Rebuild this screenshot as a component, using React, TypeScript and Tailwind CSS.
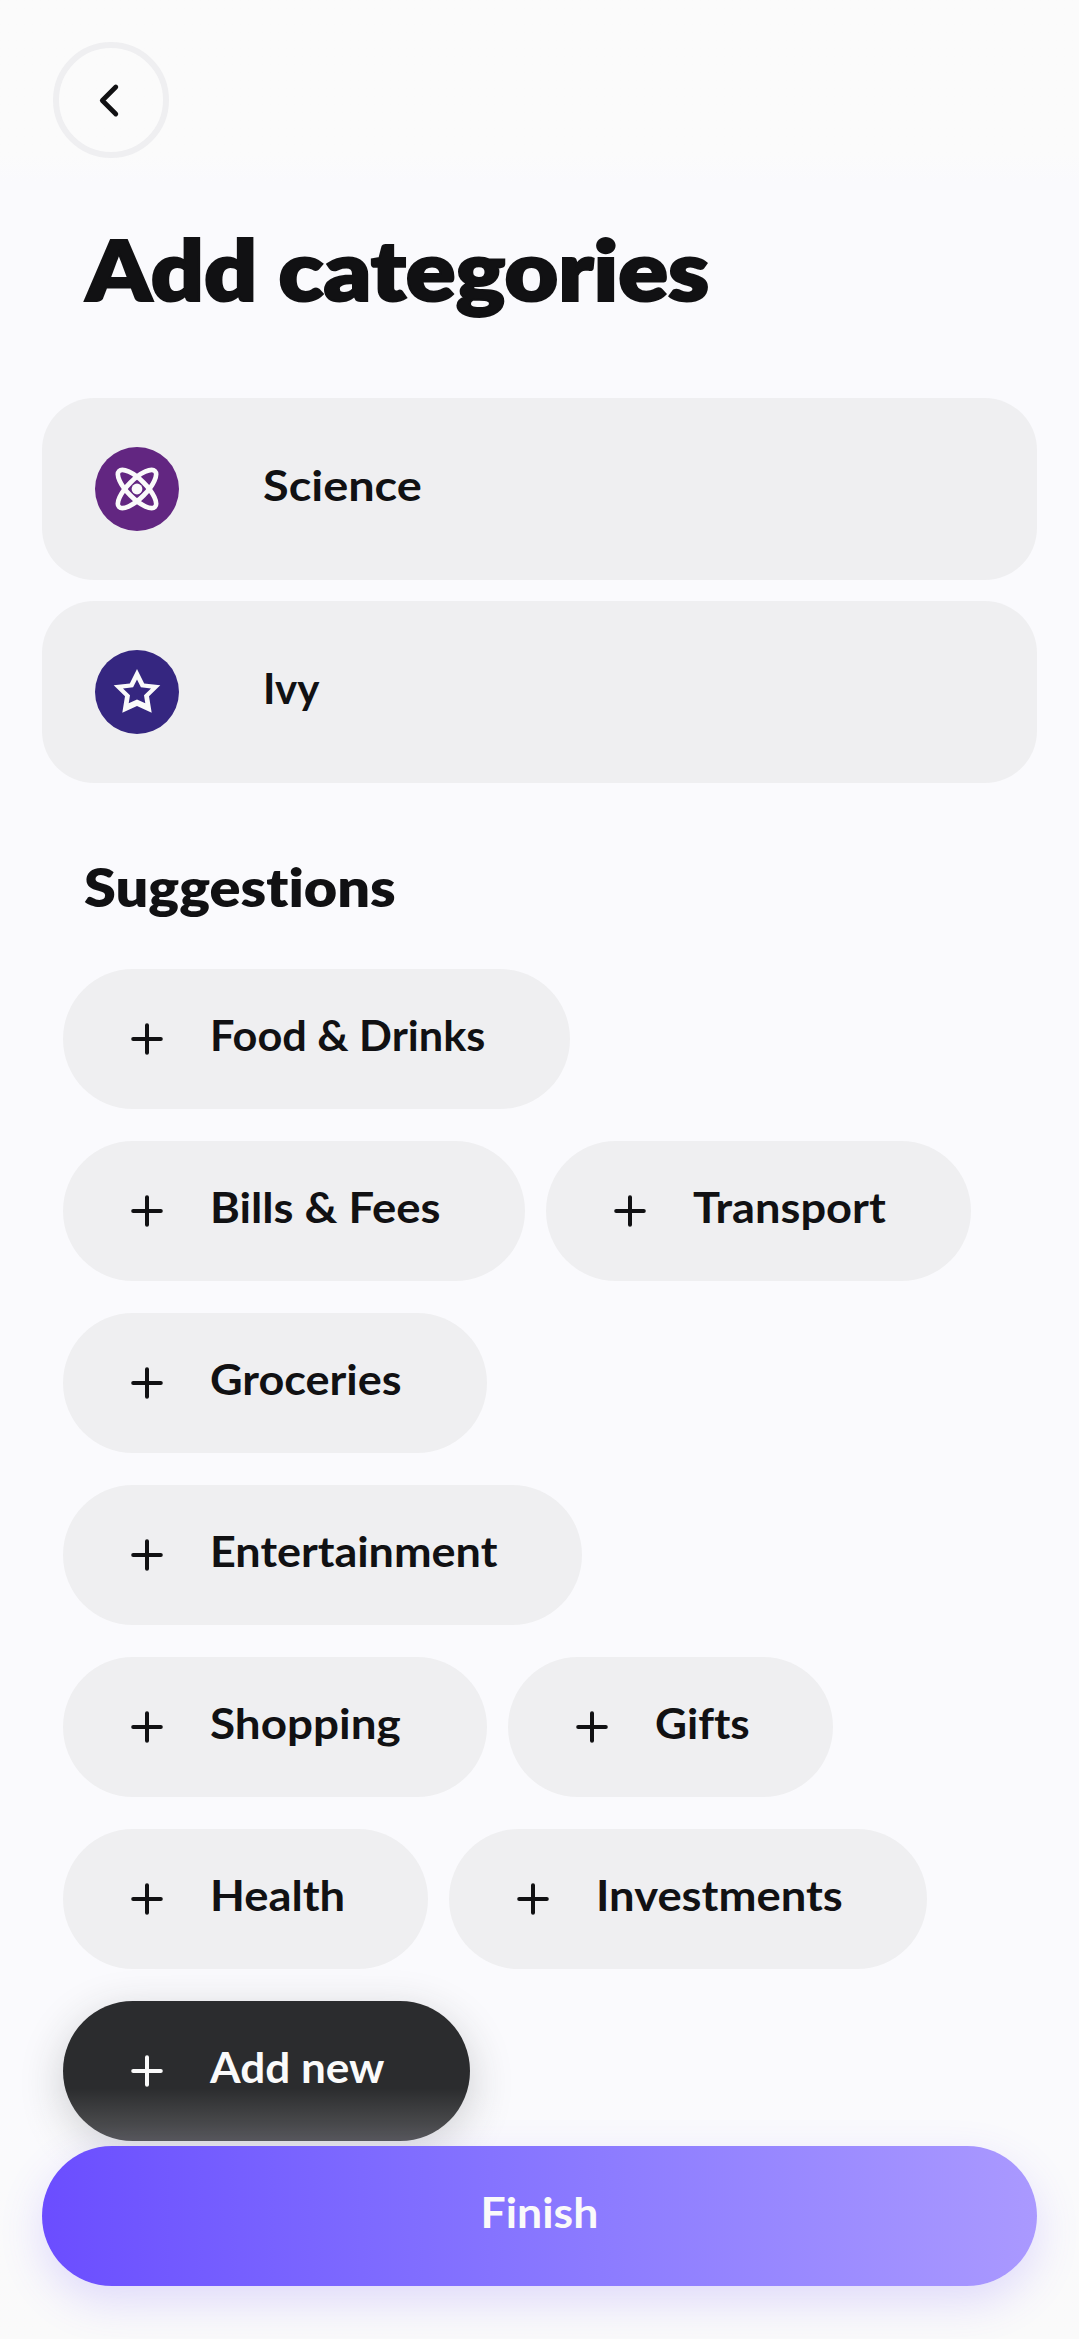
import type { ReactNode } from "react";

type ChipData = { label: string; width: string; stretch: string; dark?: boolean };

const rows: ChipData[][] = [
  [{ label: "Food & Drinks", width: "w-[506.5px]", stretch: "scale-x-[1.03]" }],
  [
    { label: "Bills & Fees", width: "w-[461.5px]", stretch: "scale-x-[1.081]" },
    { label: "Transport", width: "w-[425px]", stretch: "scale-x-[1.076]" },
  ],
  [{ label: "Groceries", width: "w-[424px]", stretch: "scale-x-[1.071]" }],
  [{ label: "Entertainment", width: "w-[519px]", stretch: "scale-x-[1.07]" }],
  [
    { label: "Shopping", width: "w-[424px]", stretch: "scale-x-[1.091]" },
    { label: "Gifts", width: "w-[325px]", stretch: "scale-x-[1.05]" },
  ],
  [
    { label: "Health", width: "w-[365px]", stretch: "scale-x-[1.079]" },
    { label: "Investments", width: "w-[478px]", stretch: "scale-x-[1.08]" },
  ],
  [{ label: "Add new", width: "w-[407px]", stretch: "scale-x-[1.05]", dark: true }],
];

function PlusIcon() {
  return (
    <svg className="size-[42px] shrink-0" viewBox="0 0 42 42" fill="none" stroke="currentColor" strokeWidth="4" strokeLinecap="round">
      <path d="M7.2 21h27.6M21 7.2v27.6" />
    </svg>
  );
}

function AtomIcon() {
  return (
    <svg className="size-[84px]" viewBox="-42 -42 84 84" fill="none" stroke="#fafafa" strokeWidth="4.7">
      <ellipse rx="25.4" ry="9.2" transform="rotate(45)" />
      <ellipse rx="25.4" ry="9.2" transform="rotate(-45)" />
      <circle r="5.4" fill="#fafafa" stroke="none" />
    </svg>
  );
}

function StarIcon() {
  return (
    <svg className="size-[84px]" viewBox="-42 -42 84 84" fill="#fafafa" fillRule="evenodd">
      <path d="M0-23 7.2-8.5 23.3-6.8 12 4.2 14.7 20.8 0 14 -14.7 20.8 -12 4.2 -23.3-6.8 -7.2-8.5ZM0-12.6 -3.9-4.8 -14-3.6 -7 3.2 -8.3 11.3 0 7.6 8.3 11.3 7 3.2 14-3.6 3.9-4.8Z" />
    </svg>
  );
}

function Chip({ label, width, stretch, dark }: ChipData) {
  const tone = dark
    ? "bg-[#2b2c2e] text-[#fafafa] shadow-[0_12px_44px_rgba(43,44,46,0.22)]"
    : "bg-[#efeff1] text-[#111113]";
  return (
    <button className={`flex h-[140px] shrink-0 items-center rounded-full pl-[63px] text-[42px] font-bold leading-none whitespace-nowrap ${tone} ${width}`}>
      <PlusIcon />
      <span className={`ml-[42px] origin-left pb-[9px] ${stretch}`}>{label}</span>
    </button>
  );
}

function CategoryCard({ children, label, tone, stretch }: { children: ReactNode; label: string; tone: string; stretch: string }) {
  return (
    <div className="flex h-[182px] items-center rounded-[52px] bg-[#efeff1] pl-[53px]">
      <div className={`size-[84px] rounded-full ${tone}`}>{children}</div>
      <span className={`ml-[84px] origin-left pb-[9px] text-[42px] font-bold leading-none ${stretch}`}>{label}</span>
    </div>
  );
}

export default function App() {
  return (
    <div className="relative h-[2339px] w-[1079px] overflow-hidden bg-[#fafafd] font-[Lato,sans-serif] text-[#111113] [font-variant-ligatures:none]">
      <header className="flex h-[182px] bg-linear-to-b from-[#fbfbfb] from-85% to-[#fafafd] pt-[42px] pl-[53px]">
        <button className="flex size-[116px] items-center justify-center rounded-full border-[6px] border-[#efeff1]">
          <svg className="size-[63px]" viewBox="0 0 63 63" fill="none" stroke="#111113" strokeWidth="4.8" strokeLinecap="round" strokeLinejoin="round">
            <path d="M35.8 18 22.3 31.5 35.8 45" />
          </svg>
        </button>
      </header>

      <h1 className="mt-[37px] ml-[86px] w-fit origin-left scale-x-[1.102] text-[84px] leading-[100px] font-extrabold [-webkit-text-stroke:2px_#111113]">Add categories</h1>

      <section className="mx-[42px] mt-[79px] flex flex-col gap-[21px]">
        <CategoryCard label="Science" tone="bg-[#622681]" stretch="scale-x-[1.116]"><AtomIcon /></CategoryCard>
        <CategoryCard label="Ivy" tone="bg-[#352680]" stretch="scale-x-100"><StarIcon /></CategoryCard>
      </section>

      <h2 className="mt-[72px] ml-[84px] w-fit origin-left scale-x-[1.098] text-[52.5px] leading-[63px] font-extrabold">Suggestions</h2>

      <section className="mt-[51px] ml-[63px] flex flex-col gap-8">
        {rows.map((row) => (
          <div key={row[0].label} className="flex gap-[21px]">
            {row.map((chip) => (
              <Chip key={chip.label} {...chip} />
            ))}
          </div>
        ))}
      </section>

      <div className="absolute inset-x-0 bottom-0 h-[251px] bg-linear-to-b from-[#fafafa]/0 to-[#fafafa] px-[42px] pt-[58px]">
        <button className="flex h-[140px] w-full items-center justify-center rounded-full bg-linear-to-r from-[#6b4dff] to-[#aa99ff] text-[42px] leading-none font-bold text-[#fafafa] shadow-[0_16px_44px_rgba(107,77,255,0.18)]">
          <span className="scale-x-[1.061] pb-[9px]">Finish</span>
        </button>
      </div>
    </div>
  );
}
